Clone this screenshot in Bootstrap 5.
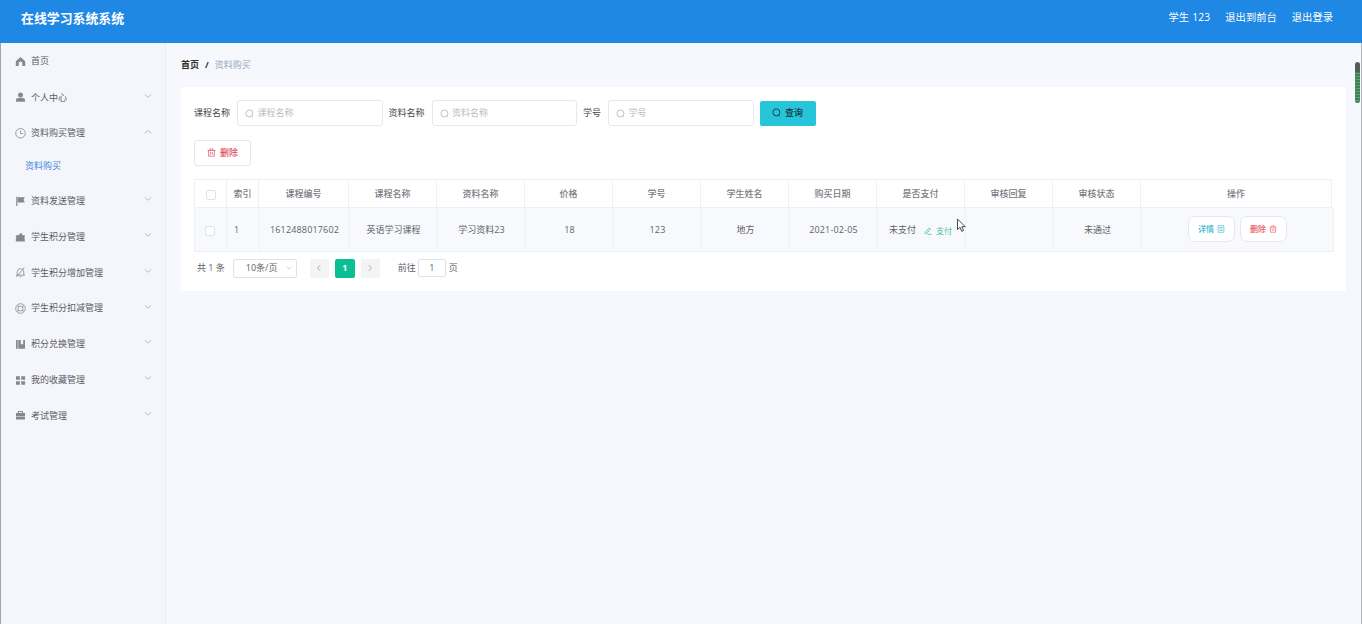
<!DOCTYPE html>
<html lang="zh-CN">
<head>
<meta charset="utf-8">
<title>在线学习系统系统</title>
<link href="https://cdn.jsdelivr.net/npm/bootstrap@5.3.0/dist/css/bootstrap.min.css" rel="stylesheet">
<style>
html,body{height:100%;overflow:hidden}
body{font-family:"Open Sans","Noto Sans CJK SC",sans-serif;font-size:9px;line-height:1.4;color:#606266;background:#f6f8fd}
svg{fill:none;stroke:currentColor;flex:none;display:block}
.shell{border-left:1px solid #a3a3ab;border-right:1px solid #b3b5bb}
.topbar{height:43px;background:#1f88e5;color:#fff;margin:0 -1px;padding:0 29px 7px 21px;font-size:10.3px}
.topbar nav{gap:15px;padding-bottom:1px}
.brand{font-size:12.9px;font-weight:700}
.side{width:165px;background:#f5f6fc;border-right:1px solid #e9ecf3;flex:none}
.item{height:35.75px;padding:2.5px 13px 0 14px;color:#5a5d66}
.item:first-child{padding-top:0}
.item:first-child .ico{margin-top:2px}
.item .ico{width:11px;height:11px;color:#85888f;margin-right:5px}
.item .arr{margin-left:auto;margin-bottom:4px;color:#b4b7be}
.solid{fill:currentColor;stroke:none}
.sub{height:32px;padding:0 0 0 24px;color:#3f87dc}
.content{padding:0 15px 0 15px;min-width:0}
.crumbs{height:44px;font-weight:700;color:#303133;padding-top:1px}
.crumbs .slash{padding:0 6px}
.crumbs .cur{font-weight:400;color:#99a5c0}
.panel{background:#fff;height:204px;padding:13px 12px 0 13px}
.fld{width:145.5px;height:26px;border:1px solid #e6e8ee;border-radius:3px;padding:0 7px;color:#b9bcc4;gap:3.5px;margin-left:7px;margin-right:6px}
.lab{color:#44474d;white-space:nowrap}
.b{font-size:9px;height:26px;padding:0;border-radius:3px;display:flex;align-items:center;justify-content:center;gap:4px;line-height:1}
.bq,.bq:hover{width:56px;height:25px;background:#26c5d9;color:#17383f;font-weight:500;border:0;border-radius:2px;padding-bottom:1px}
.bd,.bd:hover{width:57px;border:1px solid #e6e8ee;color:#e04c5c;background:#fff;font-weight:500;margin:14px 0 13px;padding-bottom:2px}
.grid-t{table-layout:fixed;margin:0;border-collapse:separate;border-spacing:0}
.grid-t th,.grid-t td{padding:2px 0 0;border:0 solid #edf0f5;border-right-width:1px;border-bottom-width:1px;text-align:center;vertical-align:middle;color:#606266}
.grid-t th{font-weight:500;color:#797c83;height:29px;border-top-width:1px}
.grid-t td{height:44px;background:#f7f9fd}
.grid-t th:first-child,.grid-t td:first-child{border-left-width:1px}
.grid-t td.idx{text-align:left;padding-left:7px}
.grid-t td.acts{padding:0 0 1px}
.chk{width:10px;height:10px;border:1px solid #dfe2e8;border-radius:2px;background:#fff;display:inline-block;vertical-align:middle}
.grid-t td .chk{margin-right:2px}
.num{letter-spacing:.17px}
.pay{color:#3dbf9b;font-size:8px}
.state{padding-right:2px}
.op{width:47px;height:26px;border:1px solid #e6e8ee;border-radius:7px;background:#fff;font-size:8px;gap:3px;font-weight:500}
.op.view{color:#36b5ca}.op.del{color:#ec5a62}
.pager{margin-top:6px;height:20px}
.total{margin-left:3px}
.sel{width:64px;height:19px;border:1px solid #e0e2e8;border-radius:2px;padding:0 4px 0 12px;margin:0 13px 0 8px}
.pgb{width:19px;height:19px;border-radius:2px;background:#f4f4f7;color:#a9acb3}
.pgb.on{background:#0bbf92;color:#fff;font-weight:700;margin:0 6px 0 6px;width:20px}
.jump{width:28px;height:18px;border:1px solid #e0e2e8;border-radius:2px;margin:0 3px 0 2px}
.thumb{position:absolute;right:1px;top:62px;width:5px;height:41px;border-radius:3px;background:linear-gradient(#555b5b 0 10px,transparent 10px),repeating-linear-gradient(#3f8156 0 2px,#57a26e 2px 3px)}
.mouse{position:absolute;left:955px;top:218px}
</style>
</head>
<body>
<svg width="0" height="0" class="position-absolute">
<symbol id="lens" viewBox="0 0 9 9"><circle cx="4.4" cy="4.4" r="3.5" stroke-width=".9"/><path d="M6.6 7l1.2 1.2"/></symbol>
<symbol id="bin" viewBox="0 0 9 9"><path d="M.5 2.5h8M3 2.4V.9h3v1.5M1.6 2.5v5.7h5.8V2.5M3.6 4v2.7M5.4 4v2.7" stroke-width=".7"/></symbol>
<symbol id="doc" viewBox="0 0 9 9"><path d="M1.3.8h6.4v7.4H1.3zM2.8 2.8h3.4M2.8 4.5h3.4M2.8 6.2h3.4" stroke-width=".7"/></symbol>
<symbol id="down" viewBox="0 0 8 8"><path d="M.8 2.5L4 5.2l3.2-2.7" stroke-width=".9"/></symbol>
</svg>
<div class="shell h-100 d-flex flex-column position-relative">
<header class="topbar d-flex align-items-center justify-content-between">
<div class="brand">在线学习系统系统</div>
<nav class="d-flex"><span class="num">学生 123</span><span>退出到前台</span><span>退出登录</span></nav>
</header>
<div class="d-flex flex-grow-1">
<aside class="side">
<div class="item d-flex align-items-center"><svg class="ico solid" viewBox="0 0 11 11"><path d="M5.5 1L10.2 5.2V10H7.3V7.2a1.8 1.8 0 0 0-3.6 0V10H.8V5.2z"/></svg>首页</div>
<div class="item d-flex align-items-center"><svg class="ico solid" viewBox="0 0 11 11"><circle cx="5.5" cy="2.9" r="2.5"/><path d="M1 9.8V8q0-2 2-2h5q2 0 2 2v1.8z"/></svg>个人中心<svg class="arr" width="8" height="8"><use href="#down"/></svg></div>
<div class="item d-flex align-items-center"><svg class="ico" viewBox="0 0 11 11"><circle cx="5.5" cy="5.3" r="4.8" stroke-width=".8"/><path d="M5.5 2.5v3h2.6" stroke-width=".8"/></svg>资料购买管理<svg class="arr" width="8" height="8" viewBox="0 0 8 8"><path d="M.8 5.2L4 2.5l3.2 2.7" stroke-width=".9"/></svg></div>
<div class="sub d-flex align-items-center">资料购买</div>
<div class="item d-flex align-items-center"><svg class="ico solid" viewBox="0 0 11 11"><path d="M1.2.8h1.2V10H1.2zM2.8 1.2h7L8.6 3.8l1.2 2.7h-7z"/></svg>资料发送管理<svg class="arr" width="8" height="8"><use href="#down"/></svg></div>
<div class="item d-flex align-items-center"><svg class="ico solid" viewBox="0 0 11 11"><path d="M.8 3.2h2.6L6.2.8l1.4 2.4h2.2v2a1 1 0 0 0 0 1.8v2.5h-9V7a1 1 0 0 0 0-1.8z"/></svg>学生积分管理<svg class="arr" width="8" height="8"><use href="#down"/></svg></div>
<div class="item d-flex align-items-center"><svg class="ico" viewBox="0 0 11 11"><path d="M2.2 8V4.8Q2.4 1.6 5.5 1.6T8.8 4.8V8M1 8.2h9M4.5 9.8h2M9.3.6L1.5 10" stroke-width=".8"/></svg>学生积分增加管理<svg class="arr" width="8" height="8"><use href="#down"/></svg></div>
<div class="item d-flex align-items-center"><svg class="ico" viewBox="0 0 11 11"><circle cx="5.5" cy="5.5" r="4.8" stroke-width=".8"/><circle cx="5.5" cy="5.5" r="2.5" stroke-width=".8"/><path d="M2 2.6l1.8 1M9 2.6l-1.8 1M2 8.4l1.8-1M9 8.4l-1.8-1" stroke-width=".8"/></svg>学生积分扣减管理<svg class="arr" width="8" height="8"><use href="#down"/></svg></div>
<div class="item d-flex align-items-center"><svg class="ico solid" viewBox="0 0 11 11"><path d="M1 1h1.7v8.8H1zM3.3 1h2.5v4.8L7 4.7l1.2 1.1V1H10v8.8H3.3z"/></svg>积分兑换管理<svg class="arr" width="8" height="8"><use href="#down"/></svg></div>
<div class="item d-flex align-items-center"><svg class="ico solid" viewBox="0 0 11 11"><path d="M1 1.2h3.9v3.5H1zM6.2 1.2h3.9v3.5H6.2zM1 6.2h3.9v3.5H1zM6.2 6.2h3.9v3.5H6.2z"/></svg>我的收藏管理<svg class="arr" width="8" height="8"><use href="#down"/></svg></div>
<div class="item d-flex align-items-center"><svg class="ico solid" viewBox="0 0 11 11"><path fill-rule="evenodd" d="M1 3h2V1h5v2h2v3.1H1zM4 3h3V1.9H4zM1 6.5h9v3.1H1z"/></svg>考试管理<svg class="arr" width="8" height="8"><use href="#down"/></svg></div>
</aside>
<main class="content flex-grow-1">
<div class="crumbs d-flex align-items-center"><span>首页</span><span class="slash">/</span><span class="cur">资料购买</span></div>
<section class="panel">
<div class="d-flex align-items-center">
<span class="lab">课程名称</span><div class="fld d-flex align-items-center"><svg width="9" height="9"><use href="#lens"/></svg>课程名称</div>
<span class="lab">资料名称</span><div class="fld d-flex align-items-center"><svg width="9" height="9"><use href="#lens"/></svg>资料名称</div>
<span class="lab">学号</span><div class="fld d-flex align-items-center"><svg width="9" height="9"><use href="#lens"/></svg>学号</div>
<button class="btn b bq"><svg width="9" height="9"><use href="#lens"/></svg>查询</button>
</div>
<button class="btn b bd"><svg width="9" height="9"><use href="#bin"/></svg>删除</button>
<table class="table grid-t" style="width:1138px">
<colgroup><col style="width:33px"><col style="width:32px"><col style="width:90px"><col span="9" style="width:88px"><col></colgroup>
<tr><th><span class="chk"></span></th><th>索引</th><th>课程编号</th><th>课程名称</th><th>资料名称</th><th>价格</th><th>学号</th><th>学生姓名</th><th>购买日期</th><th>是否支付</th><th>审核回复</th><th>审核状态</th><th>操作</th></tr>
</table>
<table class="table grid-t" style="width:1140px">
<colgroup><col style="width:33px"><col style="width:33px"><col style="width:90px"><col span="9" style="width:88px"><col></colgroup>
<tr><td><span class="chk"></span></td><td class="idx">1</td><td class="num">1612488017602</td><td>英语学习课程</td><td>学习资料23</td><td class="num">18</td><td class="num">123</td><td>地方</td><td class="num">2021-02-05</td>
<td><div class="state d-flex align-items-center justify-content-center">未支付<span class="pay d-flex align-items-center gap-1 ms-2"><svg width="8" height="8" viewBox="0 0 8 8"><path d="M1.3 5.4L5.2 1l1.3 1.2-3.9 4.2-1.6.4zM3.5 7.3h4" stroke-width=".8"/></svg>支付</span></div></td>
<td></td><td>未通过</td>
<td class="acts"><div class="d-flex justify-content-center" style="gap:5px"><span class="op view d-flex align-items-center justify-content-center">详情<svg width="8" height="8"><use href="#doc"/></svg></span><span class="op del d-flex align-items-center justify-content-center">删除<svg width="8" height="8"><use href="#bin"/></svg></span></div></td></tr>
</table>
<div class="pager d-flex align-items-center"><span class="total">共 1 条</span>
<div class="sel d-flex align-items-center justify-content-between">10条/页<svg width="6" height="6" color="#b4b7be"><use href="#down"/></svg></div>
<span class="pgb d-flex align-items-center justify-content-center"><svg width="8" height="8" viewBox="0 0 8 8"><path d="M5.2 1.2L2.6 4l2.6 2.8"/></svg></span>
<span class="pgb on d-flex align-items-center justify-content-center">1</span>
<span class="pgb d-flex align-items-center justify-content-center"><svg width="8" height="8" viewBox="0 0 8 8"><path d="M2.8 1.2L5.4 4 2.8 6.8"/></svg></span>
<span style="margin-left:18px">前往</span><span class="jump d-flex align-items-center justify-content-center">1</span><span>页</span></div>
</section>
</main>
</div>
<span class="thumb"></span>
<svg class="mouse" width="11" height="15" viewBox="0 0 11 15"><path d="M1.5 1v10.6l2.5-2.3 1.7 4 1.8-.8-1.7-3.8h3.4z" fill="#fff" stroke="#44484f"/></svg>
</div>
<script src="https://cdn.jsdelivr.net/npm/bootstrap@5.3.0/dist/js/bootstrap.bundle.min.js"></script>
</body>
</html>
